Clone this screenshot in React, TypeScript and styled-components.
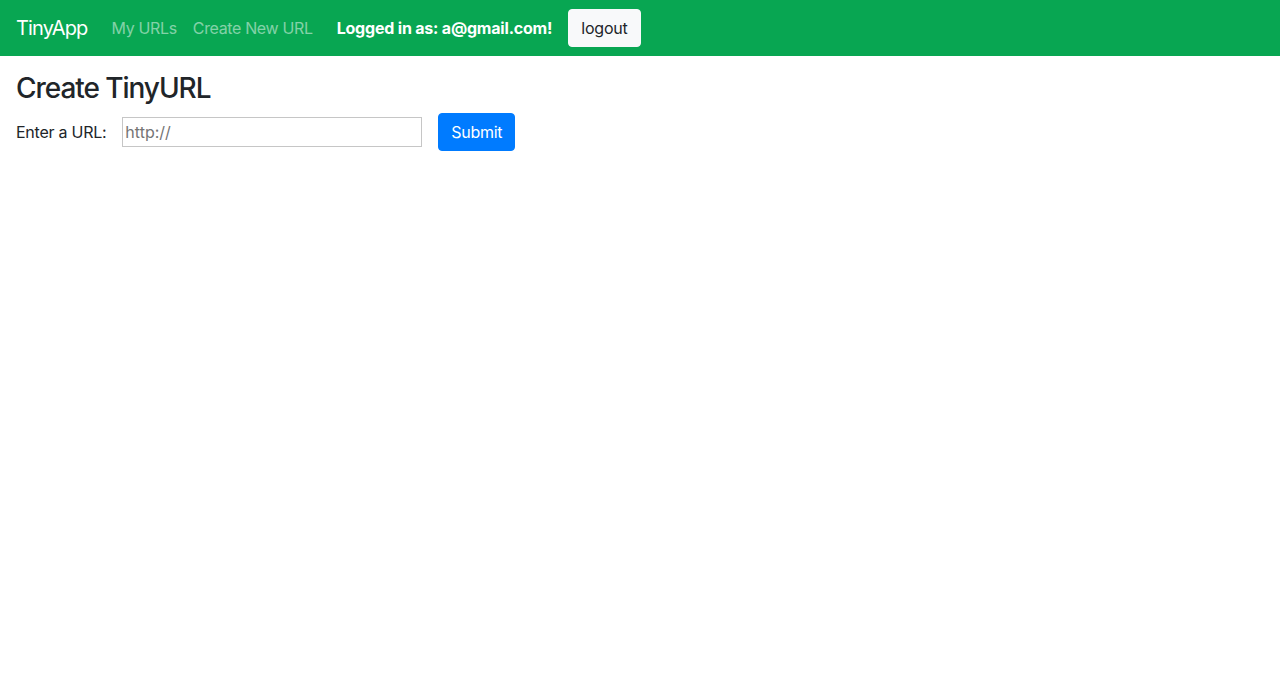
import React from 'react';
import styled, { createGlobalStyle } from 'styled-components';

const GlobalStyle = createGlobalStyle`
  html, body {
    margin: 0;
    padding: 0;
    background: #ffffff;
  }
  body {
    font-family: Inter, "Liberation Sans", Arial, sans-serif;
    font-size: 16px;
    line-height: 1.5;
    color: #212529;
  }
  * {
    box-sizing: border-box;
  }
`;

function App() {
  const links = ['My URLs', 'Create New URL'];

  return (
    <>
      <GlobalStyle />
      <NavBar>
        <Brand href="#">TinyApp</Brand>
        <NavList>
          {links.map((link) => (
            <NavLink key={link} href="#">
              {link}
            </NavLink>
          ))}
        </NavList>
        <LoginText>Logged in as: a@gmail.com!</LoginText>
        <LogoutButton type="button">logout</LogoutButton>
      </NavBar>
      <Main>
        <Title>Create TinyURL</Title>
        <UrlForm onSubmit={(e) => e.preventDefault()}>
          <Label htmlFor="longURL">Enter a URL:</Label>
          <UrlInput id="longURL" type="text" placeholder="http://" />
          <SubmitButton type="submit">Submit</SubmitButton>
        </UrlForm>
      </Main>
    </>
  );
}

export default App;

const NavBar = styled.nav`
  display: flex;
  align-items: center;
  height: 56px;
  padding: 8px 16px;
  background: #08a652;
`;

const Brand = styled.a`
  margin-right: 16px;
  font-size: 20px;
  line-height: 30px;
  letter-spacing: -0.85px;
  color: #ffffff;
  text-decoration: none;
`;

const NavList = styled.div`
  display: flex;
  align-items: center;
`;

const NavLink = styled.a`
  padding: 8px;
  font-size: 16px;
  letter-spacing: -0.35px;
  color: rgba(255, 255, 255, 0.5);
  text-decoration: none;
`;

const LoginText = styled.span`
  margin-left: 16px;
  margin-right: 16px;
  font-weight: 700;
  letter-spacing: -0.2px;
  color: #ffffff;
`;

const LogoutButton = styled.button`
  height: 38px;
  padding: 0 12px;
  border: 1px solid #f8f9fa;
  border-radius: 4px;
  background: #f8f9fa;
  font-family: inherit;
  font-size: 16px;
  letter-spacing: -0.2px;
  color: #212529;
`;

const Main = styled.main`
  padding: 16px;
`;

const Title = styled.h3`
  margin: 0 0 7px;
  font-size: 28px;
  font-weight: 500;
  line-height: 1.2;
  letter-spacing: -1.05px;
`;

const UrlForm = styled.form`
  display: flex;
  align-items: center;
  gap: 16px;
`;

const Label = styled.label`
  font-size: 16px;
  letter-spacing: -0.25px;
`;

const UrlInput = styled.input`
  width: 300px;
  height: 30px;
  padding: 1px 2px;
  border: 1px solid #c6c6c6;
  font-family: inherit;
  font-size: 16px;
  color: #212529;
  outline: none;

  &::placeholder {
    color: #757575;
  }
`;

const SubmitButton = styled.button`
  height: 38px;
  padding: 0 12px;
  border: 1px solid #007bff;
  border-radius: 4px;
  background: #007bff;
  font-family: inherit;
  font-size: 16px;
  letter-spacing: -0.3px;
  color: #ffffff;
`;
